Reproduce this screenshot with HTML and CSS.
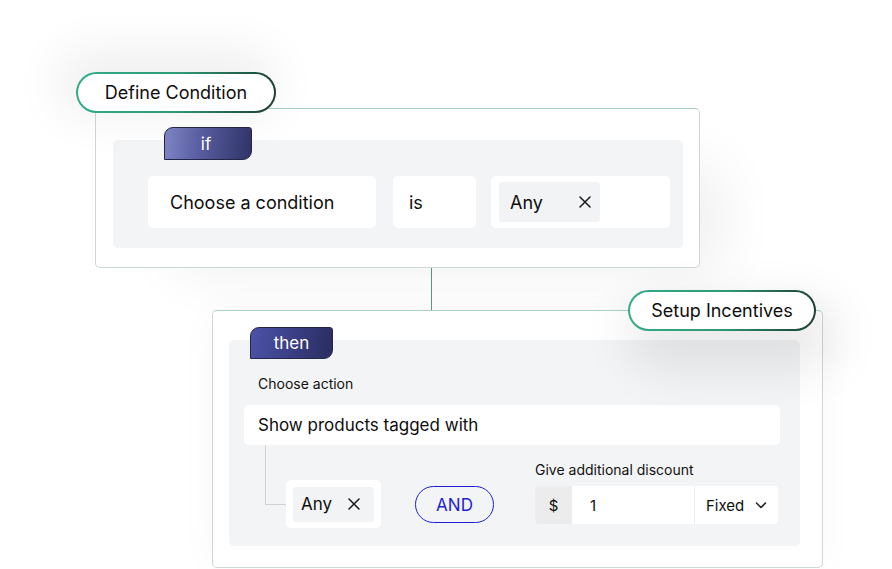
FILE: index.html
```html
<!DOCTYPE html>
<html>
<head>
<meta charset="utf-8">
<link rel="stylesheet" href="styles.css">
</head>
<body>
<div class="canvas">
  <div class="card card-if">
    <div class="pill pill-define">Define Condition</div>
    <div class="panel panel-if">
      <div class="tab tab-if">if</div>
      <div class="cond-row">
        <div class="box box-cond">Choose a condition</div>
        <div class="box box-is">is</div>
        <div class="box box-any">
          <div class="chip chip-wide"><span>Any</span><svg class="x" width="12" height="12" viewBox="0 0 12 12"><path d="M1 1 L11 11 M11 1 L1 11" stroke="#1a1a1a" stroke-width="1.5" stroke-linecap="round"/></svg></div>
        </div>
      </div>
    </div>
  </div>
  <div class="connector"></div>
  <div class="card card-then">
    <div class="pill pill-setup">Setup Incentives</div>
    <div class="panel panel-then">
      <div class="tab tab-then">then</div>
      <div class="label label-action">Choose action</div>
      <div class="box box-show">Show products tagged with</div>
      <div class="lower-row">
        <div class="tree"></div>
        <div class="box box-any2">
          <div class="chip"><span>Any</span><svg class="x" width="12" height="12" viewBox="0 0 12 12"><path d="M1 1 L11 11 M11 1 L1 11" stroke="#1a1a1a" stroke-width="1.5" stroke-linecap="round"/></svg></div>
        </div>
        <div class="and-btn">AND</div>
        <div class="discount">
          <div class="label">Give additional discount</div>
          <div class="input-group">
            <div class="ig-prefix">$</div>
            <div class="ig-value">1</div>
            <div class="ig-select">Fixed
              <svg width="14" height="14" viewBox="0 0 14 14"><path d="M2.5 5 L7 9.5 L11.5 5" fill="none" stroke="#222" stroke-width="1.6" stroke-linecap="round" stroke-linejoin="round"/></svg>
            </div>
          </div>
        </div>
      </div>
    </div>
  </div>
</div>
</body>
</html>
```

FILE: styles.css
```css
* { box-sizing: border-box; }
html, body {
  margin: 0;
  padding: 0;
  background: #ffffff;
  width: 892px;
  height: 569px;
  overflow: hidden;
  font-family: "Inter", "Noto Sans", sans-serif;
  color: #0e0e0e;
}
.canvas {
  padding-top: 108px;
  padding-left: 95px;
  position: relative;
}
.card {
  position: relative;
  background: #ffffff;
  border: 1px solid #cdd8d4;
  border-top-color: #a9cfc2;
  border-radius: 5px;
}
.card-if {
  width: 605px;
  height: 160px;
  padding: 31px 16px 0 17px;
  box-shadow: 50px 30px 60px -30px rgba(0,0,0,0.07);
}
.card-then {
  margin-left: 117px;
  width: 611px;
  height: 258px;
  padding: 29px 0 0 16px;
  box-shadow: 0 0 40px rgba(0,0,0,0.03);
}
.connector {
  margin-left: 336px;
  width: 1px;
  height: 42px;
  background: #5f9685;
}
.pill {
  position: absolute;
  height: 41px;
  border-radius: 21px;
  border: 2px solid transparent;
  background:
    linear-gradient(#fff, #fff) padding-box,
    linear-gradient(100deg, #32ac87 0%, #2e9a78 50%, #1b3a32 100%) border-box;
  font-size: 18px;
  display: flex;
  align-items: center;
  justify-content: center;
  color: #0e0e0e;
  z-index: 2;
}
.pill-define {
  left: -20px;
  top: -37px;
  width: 200px;
  box-shadow: -10px -10px 50px 10px rgba(0,0,0,0.07);
}
.pill-setup {
  left: 415px;
  top: -21px;
  width: 188px;
  box-shadow: 10px 24px 50px 12px rgba(0,0,0,0.09);
}
.panel {
  position: relative;
  background: #f3f4f5;
  border-radius: 5px;
}
.panel-if {
  width: 570px;
  height: 108px;
  padding: 36px 0 0 35px;
}
.panel-then {
  width: 571px;
  height: 206px;
  padding: 36px 0 0 15px;
}
.tab {
  position: absolute;
  top: -13px;
  height: 33px;
  color: #fff;
  font-size: 17px;
  display: flex;
  align-items: center;
  justify-content: center;
  border: 1px solid #23264a;
  border-radius: 9px 3px 9px 0;
}
.tab-if {
  left: 51px;
  width: 88px;
  padding-right: 4px;
  background: linear-gradient(100deg, #8187c6 0%, #5a5fa3 40%, #2f3366 100%);
}
.tab-then {
  left: 21px;
  width: 83px;
  height: 32px;
  background: linear-gradient(100deg, #4d53a8 0%, #3a3f86 50%, #2a2d5e 100%);
}
.cond-row {
  display: flex;
}
.box {
  background: #fff;
  border-radius: 5px;
  font-size: 17px;
  display: flex;
  align-items: center;
}
.box-cond {
  width: 228px;
  height: 52px;
  padding-left: 22px;
  font-size: 18px;
}
.box-is {
  width: 83px;
  height: 52px;
  margin-left: 17px;
  padding-left: 16px;
  font-size: 18px;
}
.box-any {
  width: 179px;
  height: 52px;
  margin-left: 15px;
  padding-left: 8px;
}
.chip {
  background: #f2f3f4;
  border-radius: 3px;
  display: flex;
  align-items: center;
  font-size: 17px;
  height: 35px;
  width: 81px;
  padding-left: 8px;
}
.chip-wide {
  width: 101px;
  height: 40px;
  padding-left: 11px;
  font-size: 18px;
}
.chip .x {
  margin-left: auto;
  margin-right: 14px;
}
.chip-wide .x { margin-right: 9px; }
.label {
  font-size: 14px;
  color: #111;
}
.label-action {
  padding-left: 14px;
  height: 29px;
  line-height: 16px;
}
.box-show {
  width: 536px;
  height: 40px;
  padding-left: 14px;
  font-size: 17px;
}
.lower-row {
  display: flex;
  align-items: flex-start;
  padding-left: 21px;
}
.tree {
  width: 21px;
  height: 60px;
  border-left: 1px solid #cfd2d4;
  border-bottom: 1px solid #cfd2d4;
}
.box-any2 {
  width: 95px;
  height: 48px;
  margin-top: 35px;
  padding-left: 7px;
}
.and-btn {
  margin-top: 41px;
  margin-left: 34px;
  width: 79px;
  height: 37px;
  border: 1.5px solid #1f1fd4;
  border-radius: 19px;
  color: #1f1fd4;
  font-size: 17px;
  display: flex;
  align-items: center;
  justify-content: center;
}
.discount {
  margin-left: 41px;
  margin-top: 16px;
}
.discount .label {
  height: 25px;
  line-height: 18px;
}
.input-group {
  display: flex;
  width: 243px;
  height: 38px;
  border-radius: 4px;
  overflow: hidden;
  background: #fff;
  font-size: 15px;
}
.ig-prefix {
  width: 37px;
  background: #ececed;
  display: flex;
  align-items: center;
  justify-content: center;
}
.ig-value {
  width: 123px;
  display: flex;
  align-items: center;
  padding-left: 18px;
  border-right: 1px solid #eceded;
}
.ig-select {
  flex: 1;
  display: flex;
  align-items: center;
  padding-left: 11px;
  gap: 10px;
}
```
